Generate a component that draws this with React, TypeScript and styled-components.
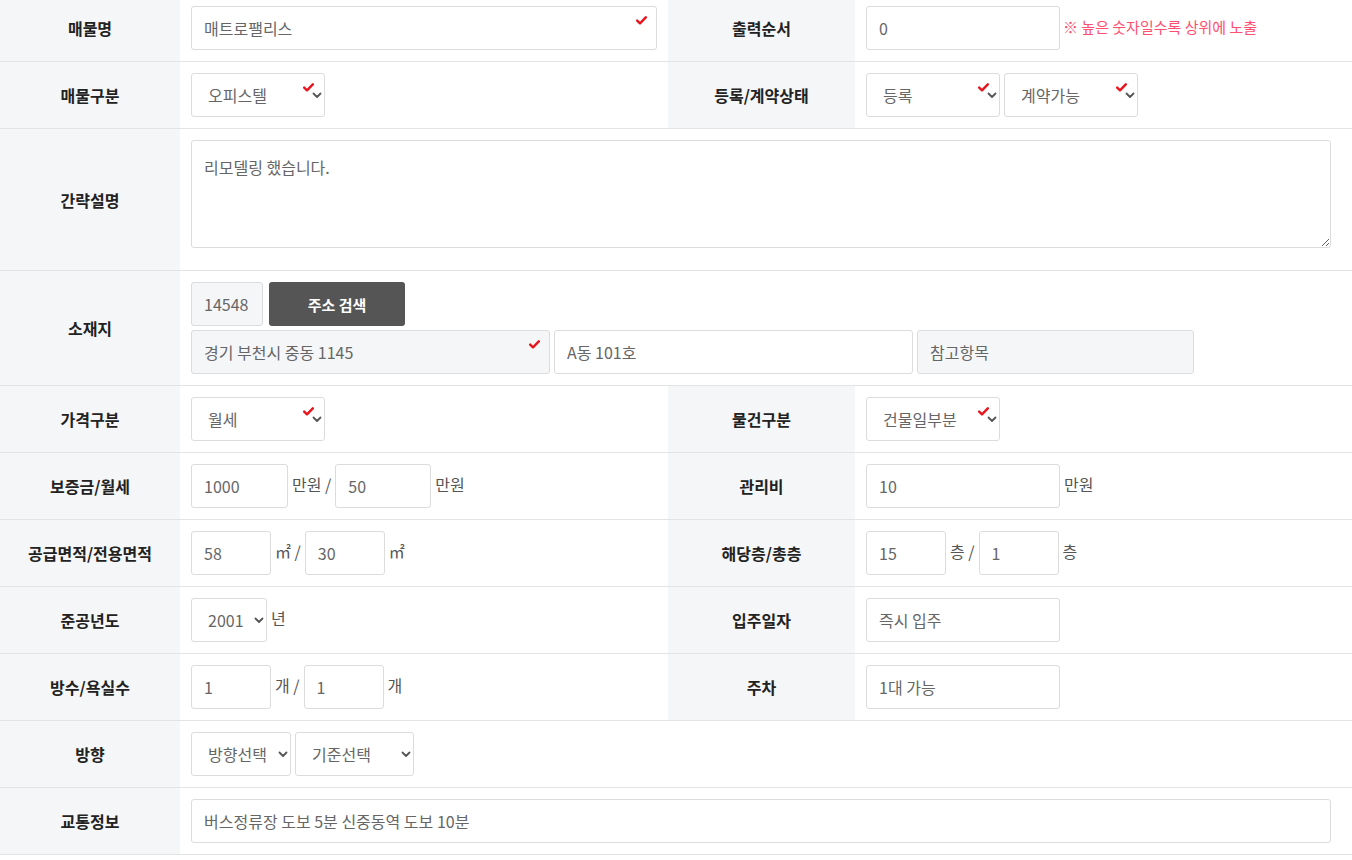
import React from "react";
import styled, { createGlobalStyle } from "styled-components";

const GlobalStyle = createGlobalStyle`
  html, body {
    margin: 0;
    padding: 0;
    background: #fff;
    overflow: hidden;
  }
  body {
    font-family: "Noto Sans CJK KR", "Noto Sans", sans-serif;
    color: #333;
  }
  * { box-sizing: border-box; }
`;

const Table = styled.div`
  width: 1352px;
  margin-top: -5px;
`;

const Row = styled.div`
  display: grid;
  grid-template-columns: 180px 488px 187px 1fr;
  border-bottom: 1px solid #e3e3e3;
`;

const Label = styled.div`
  background: #f5f6f8;
  display: flex;
  align-items: center;
  justify-content: center;
  font-size: 16px;
  font-weight: 700;
  color: #222;
`;

const Value = styled.div<{ $wide?: boolean }>`
  grid-column: ${(p) => (p.$wide ? "span 3" : "auto")};
  padding: 11px;
  display: flex;
  align-items: flex-start;
  gap: 4px;
`;

const Stack = styled.div`
  display: flex;
  flex-direction: column;
  gap: 4px;
`;

const Line = styled.div`
  display: flex;
  gap: 4px;
`;

const Field = styled.div<{ $w: number }>`
  position: relative;
  width: ${(p) => p.$w}px;
  height: 44px;
  flex: none;
`;

const TextBox = styled.input<{ $readOnlyBg?: boolean }>`
  width: 100%;
  height: 100%;
  border: 1px solid #dcdcdc;
  border-radius: 3px;
  padding: 0 12px;
  font-family: inherit;
  font-size: 16px;
  color: #666;
  background: ${(p) => (p.$readOnlyBg ? "#f5f6f8" : "#fff")};
  outline: none;
`;

const SelectBox = styled.select`
  width: 100%;
  height: 100%;
  appearance: none;
  border: 1px solid #dcdcdc;
  border-radius: 3px;
  padding: 0 20px 0 16px;
  font-family: inherit;
  font-size: 16px;
  color: #666;
  background: #fff;
  outline: none;
`;

const Chevron = styled.svg`
  position: absolute;
  right: 3px;
  top: 19px;
  pointer-events: none;
`;

const Check = styled.svg<{ $right: number }>`
  position: absolute;
  right: ${(p) => p.$right}px;
  top: 10px;
  pointer-events: none;
`;

const Area = styled.textarea`
  width: 1140px;
  height: 108px;
  margin-bottom: 11px;
  border: 1px solid #dcdcdc;
  border-radius: 3px;
  padding: 14px 12px;
  font-family: inherit;
  font-size: 16px;
  color: #666;
  resize: vertical;
  outline: none;
  display: block;
`;

const Unit = styled.span`
  font-size: 16px;
  color: #555;
  line-height: 20px;
  margin-top: 10px;
  white-space: nowrap;
`;

const Note = styled.span`
  font-size: 15px;
  color: #ff4f6e;
  line-height: 20px;
  margin-top: 11px;
  margin-left: -1px;
  white-space: nowrap;
`;

const SearchButton = styled.button`
  width: 136px;
  height: 44px;
  border: none;
  border-radius: 3px;
  background: #555;
  color: #fff;
  font-family: inherit;
  font-size: 15px;
  font-weight: 700;
  margin-left: 2px;
`;

const CheckMark = ({ right = 10 }: { right?: number }) => (
  <Check $right={right} width="11" height="9" viewBox="0 0 11 9">
    <path d="M1.2 4.6 L4 7.3 L9.8 1.3" fill="none" stroke="#e8141d" strokeWidth="2.4" strokeLinecap="round" strokeLinejoin="round" />
  </Check>
);

const Input = ({ w, value, check, gray }: { w: number; value: string; check?: boolean; gray?: boolean }) => (
  <Field $w={w}>
    <TextBox defaultValue={value} $readOnlyBg={gray} readOnly={gray} />
    {check && <CheckMark />}
  </Field>
);

const Select = ({ w, value, check }: { w: number; value: string; check?: boolean }) => (
  <Field $w={w}>
    <SelectBox defaultValue={value}>
      <option>{value}</option>
    </SelectBox>
    <Chevron width="10" height="7" viewBox="0 0 10 7">
      <path d="M1.5 1.5 L5 5 L8.5 1.5" fill="none" stroke="#555" strokeWidth="1.8" strokeLinecap="round" strokeLinejoin="round" />
    </Chevron>
    {check && <CheckMark right={11} />}
  </Field>
);

export default function App() {
  return (
    <>
      <GlobalStyle />
      <Table>
        <Row>
          <Label>매물명</Label>
          <Value>
            <Input w={466} value="매트로팰리스" check />
          </Value>
          <Label>출력순서</Label>
          <Value>
            <Input w={194} value="0" />
            <Note>※ 높은 숫자일수록 상위에 노출</Note>
          </Value>
        </Row>
        <Row>
          <Label>매물구분</Label>
          <Value>
            <Select w={134} value="오피스텔" check />
          </Value>
          <Label>등록/계약상태</Label>
          <Value>
            <Select w={134} value="등록" check />
            <Select w={134} value="계약가능" check />
          </Value>
        </Row>
        <Row>
          <Label>간략설명</Label>
          <Value $wide>
            <Area defaultValue="리모델링 했습니다." />
          </Value>
        </Row>
        <Row>
          <Label>소재지</Label>
          <Value $wide>
            <Stack>
              <Line>
                <Input w={72} value="14548" gray />
                <SearchButton>주소 검색</SearchButton>
              </Line>
              <Line>
                <Input w={359} value="경기 부천시 중동 1145" gray check />
                <Input w={359} value="A동 101호" />
                <Input w={277} value="참고항목" gray />
              </Line>
            </Stack>
          </Value>
        </Row>
        <Row>
          <Label>가격구분</Label>
          <Value>
            <Select w={134} value="월세" check />
          </Value>
          <Label>물건구분</Label>
          <Value>
            <Select w={134} value="건물일부분" check />
          </Value>
        </Row>
        <Row>
          <Label>보증금/월세</Label>
          <Value>
            <Input w={97} value="1000" />
            <Unit>만원 /</Unit>
            <Input w={96} value="50" />
            <Unit>만원</Unit>
          </Value>
          <Label>관리비</Label>
          <Value>
            <Input w={194} value="10" />
            <Unit>만원</Unit>
          </Value>
        </Row>
        <Row>
          <Label>공급면적/전용면적</Label>
          <Value>
            <Input w={80} value="58" />
            <Unit>㎡ /</Unit>
            <Input w={80} value="30" />
            <Unit>㎡</Unit>
          </Value>
          <Label>해당층/총층</Label>
          <Value>
            <Input w={80} value="15" />
            <Unit>층 /</Unit>
            <Input w={80} value="1" />
            <Unit>층</Unit>
          </Value>
        </Row>
        <Row>
          <Label>준공년도</Label>
          <Value>
            <Select w={76} value="2001" />
            <Unit>년</Unit>
          </Value>
          <Label>입주일자</Label>
          <Value>
            <Input w={194} value="즉시 입주" />
          </Value>
        </Row>
        <Row>
          <Label>방수/욕실수</Label>
          <Value>
            <Input w={80} value="1" />
            <Unit>개 /</Unit>
            <Input w={80} value="1" />
            <Unit>개</Unit>
          </Value>
          <Label>주차</Label>
          <Value>
            <Input w={194} value="1대 가능" />
          </Value>
        </Row>
        <Row>
          <Label>방향</Label>
          <Value $wide>
            <Select w={100} value="방향선택" />
            <Select w={119} value="기준선택" />
          </Value>
        </Row>
        <Row>
          <Label>교통정보</Label>
          <Value $wide>
            <Input w={1140} value="버스정류장 도보 5분 신중동역 도보 10분" />
          </Value>
        </Row>
      </Table>
    </>
  );
}
